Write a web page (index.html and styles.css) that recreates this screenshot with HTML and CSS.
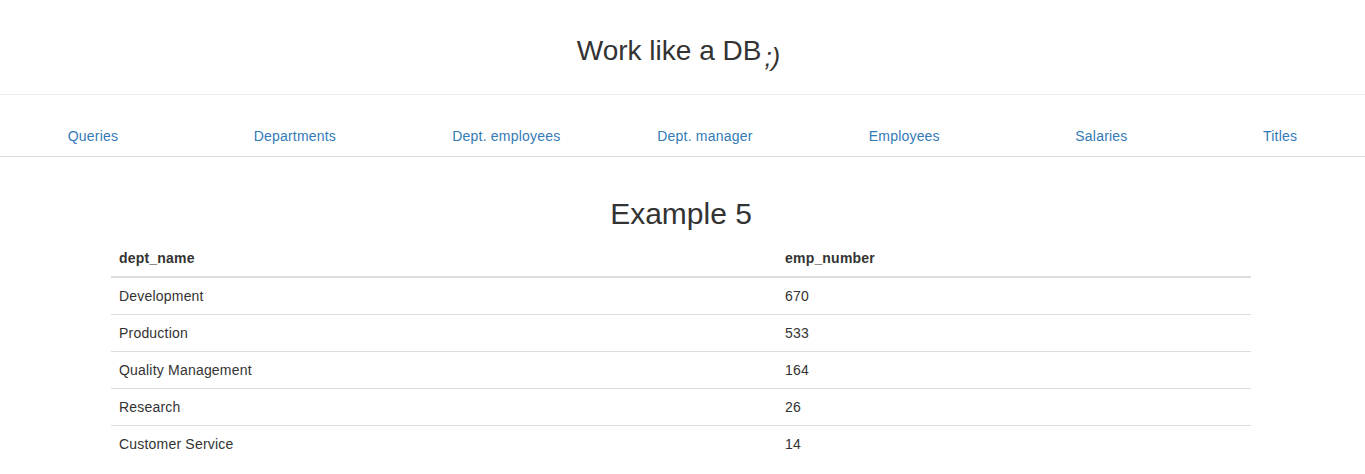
FILE: index.html
```html
<!DOCTYPE html>
<html lang="en">
<head>
<meta charset="utf-8">
<title>Work like a DB</title>
<link rel="stylesheet" href="styles.css">
</head>
<body>
<header class="page-header">
  <h1 class="site-title">Work like a DB<span class="wink">;)</span></h1>
</header>
<nav class="tabs">
  <ul class="tab-list">
    <li class="tab"><a href="#">Queries</a></li>
    <li class="tab"><a href="#">Departments</a></li>
    <li class="tab"><a href="#">Dept. employees</a></li>
    <li class="tab"><a href="#">Dept. manager</a></li>
    <li class="tab"><a href="#">Employees</a></li>
    <li class="tab"><a href="#">Salaries</a></li>
    <li class="tab"><a href="#">Titles</a></li>
  </ul>
</nav>
<main class="container">
  <h2 class="example-title">Example 5</h2>
  <table class="data-table">
    <thead>
      <tr><th class="col-name">dept_name</th><th>emp_number</th></tr>
    </thead>
    <tbody>
      <tr><td>Development</td><td>670</td></tr>
      <tr><td>Production</td><td>533</td></tr>
      <tr><td>Quality Management</td><td>164</td></tr>
      <tr><td>Research</td><td>26</td></tr>
      <tr><td>Customer Service</td><td>14</td></tr>
    </tbody>
  </table>
</main>
</body>
</html>
```
FILE: styles.css
```css
* { box-sizing: border-box; }
html, body { margin: 0; padding: 0; }
body {
  font-family: "Liberation Sans", Arial, Helvetica, sans-serif;
  font-size: 14px;
  line-height: 20px;
  letter-spacing: 0.2px;
  color: #333;
  background: #fff;
}
.page-header {
  padding: 35px 0 28px;
  border-bottom: 1px solid #eee;
  text-align: center;
}
.site-title {
  margin: 0;
  font-size: 28px;
  line-height: 31px;
  font-weight: 400;
  letter-spacing: 0;
  color: #333;
}
.wink {
  display: inline-block;
  font-size: 26px;
  font-style: italic;
  line-height: 0;
  vertical-align: -6px;
  margin-left: 3px;
  margin-right: 8px;
}
.tabs { margin-top: 21px; }
.tab-list {
  display: table;
  width: 100%;
  margin: 0;
  padding: 0;
  list-style: none;
}
.tab {
  display: table-cell;
  width: 1%;
}
.tab a {
  display: block;
  padding: 10px 15px;
  text-align: center;
  color: #337ab7;
  text-decoration: none;
  border-bottom: 1px solid #ddd;
  border-radius: 4px 4px 0 0;
}
.container {
  width: 1143px;
  margin: 0 auto;
  padding: 20px 3px 0 0;
}
.example-title {
  margin: 20px 0 10px;
  font-size: 30px;
  line-height: 33px;
  font-weight: 400;
  letter-spacing: 0;
  text-align: center;
  color: #333;
}
.data-table {
  width: 100%;
  border-collapse: collapse;
  border-spacing: 0;
}
.data-table th,
.data-table td {
  padding: 8px;
  line-height: 20px;
  text-align: left;
  vertical-align: top;
}
.data-table th {
  font-weight: 700;
  border-bottom: 2px solid #ddd;
  vertical-align: bottom;
}
.data-table .col-name { width: 666px; }
.data-table td { border-top: 1px solid #ddd; }
```
